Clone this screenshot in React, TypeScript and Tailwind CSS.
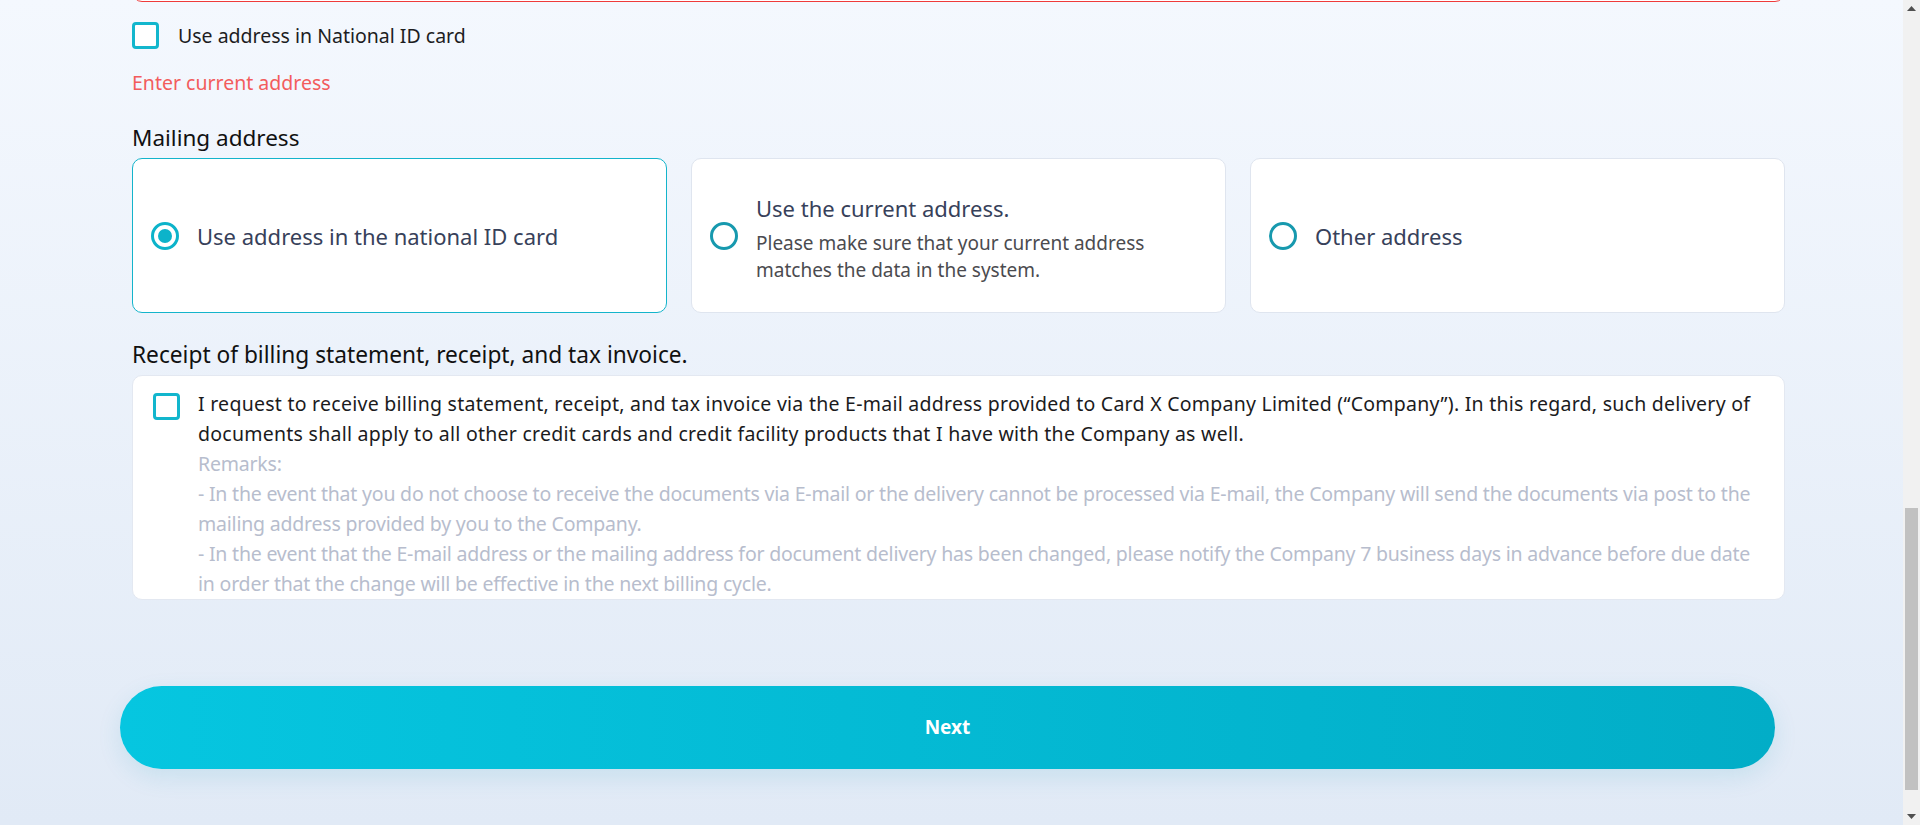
import React, { useState } from 'react'

const mailingOptions = [
  { id: 'idcard', title: 'Use address in the national ID card' },
  {
    id: 'current',
    title: 'Use the current address.',
    note: 'Please make sure that your current address matches the data in the system.',
  },
  { id: 'other', title: 'Other address' },
]

function Checkbox({ checked, onToggle }: { checked: boolean; onToggle: () => void }) {
  return (
    <button
      type="button"
      onClick={onToggle}
      className="flex size-[27px] shrink-0 items-center justify-center rounded-[4px] border-[3px] border-[#12b6cd] bg-white"
    >
      {checked && (
        <svg viewBox="0 0 16 16" className="size-4 text-[#12b6cd]">
          <path d="M3 8.5l3.2 3L13 4.5" fill="none" stroke="currentColor" strokeWidth="2.4" strokeLinecap="round" strokeLinejoin="round" />
        </svg>
      )}
    </button>
  )
}

function Radio({ checked }: { checked: boolean }) {
  return (
    <span
      className={
        checked
          ? 'flex size-[28px] shrink-0 items-center justify-center rounded-full border-[3px] border-[#0cb3ca]'
          : 'flex size-[28px] shrink-0 items-center justify-center rounded-full border-[3px] border-[#1799ae]'
      }
    >
      {checked && <span className="size-[14px] rounded-full bg-[#0cb3ca]" />}
    </span>
  )
}

// classic windows style scrollbar of the page
function Scrollbar() {
  return (
    <div className="flex h-full w-[17px] shrink-0 flex-col bg-[#f1f1f1]">
      <div className="flex h-[17px] items-center justify-center">
        <svg width="9" height="5" viewBox="0 0 9 5">
          <path d="M4.5 0L9 5H0z" fill="#505050" />
        </svg>
      </div>
      <div className="flex flex-1 flex-col">
        <div className="h-[491px]" />
        <div className="mx-[2px] h-[282px] bg-[#c1c1c1]" />
      </div>
      <div className="flex h-[17px] items-center justify-center">
        <svg width="9" height="5" viewBox="0 0 9 5">
          <path d="M0 0h9L4.5 5z" fill="#505050" />
        </svg>
      </div>
    </div>
  )
}

export default function App() {
  const [sameAsIdCard, setSameAsIdCard] = useState(false)
  const [mailing, setMailing] = useState('idcard')
  const [eStatement, setEStatement] = useState(false)

  return (
    <div className="flex h-[825px] w-full overflow-hidden bg-gradient-to-b from-[#f4f8fe] to-[#e1eaf6] font-['Noto_Sans',sans-serif]">
      <main className="flex h-full flex-1 flex-col justify-end overflow-hidden pb-[56px]">
        <div className="ml-[132px] flex w-[1653px] shrink-0 flex-col">
          <div className="h-[64px] rounded-[10px] border border-[#ef3b3b] bg-white" />

          <div className="mt-5 flex items-center gap-[19px]">
            <Checkbox checked={sameAsIdCard} onToggle={() => setSameAsIdCard(!sameAsIdCard)} />
            <span className="text-[19.5px] leading-[26px] text-[#1d1d1f]">Use address in National ID card</span>
          </div>

          <p className="mt-[20px] text-[19.5px] leading-[27px] text-[#f25c5c]">Enter current address</p>

          <h2 className="mt-[27px] text-[22.5px] leading-[30px] text-[#111]">Mailing address</h2>
          <div className="mt-[5px] grid grid-cols-3 gap-6">
            {mailingOptions.map((o) => {
              const checked = mailing === o.id
              return (
                <button
                  key={o.id}
                  type="button"
                  onClick={() => setMailing(o.id)}
                  className={
                    checked
                      ? 'flex h-[155px] items-center gap-[18px] rounded-[10px] border border-[#14b4cb] bg-white pl-[18px] pr-6 text-left'
                      : 'flex h-[155px] items-center gap-[18px] rounded-[10px] border border-[#dfe5ef] bg-white pl-[18px] pr-6 text-left'
                  }
                >
                  <Radio checked={checked} />
                  {o.note ? (
                    <div className="flex flex-col pt-[6px]">
                      <span className="text-[22px] leading-[30px] text-[#37415a]">{o.title}</span>
                      <span className="mt-[7px] max-w-[420px] text-[19px] leading-[27px] text-[#4b4b4f]">{o.note}</span>
                    </div>
                  ) : (
                    <span className="text-[22px] leading-[30px] text-[#37415a]">{o.title}</span>
                  )}
                </button>
              )
            })}
          </div>

          <h2 className="mt-[27px] text-[22.7px] leading-[30px] text-[#111]">
            Receipt of billing statement, receipt, and tax invoice.
          </h2>
          <div className="mt-[5px] flex h-[225px] gap-[18px] rounded-[10px] border border-[#e3e8f1] bg-white pl-5 pr-6 pt-[13px]">
            <div className="pt-[4px]">
              <Checkbox checked={eStatement} onToggle={() => setEStatement(!eStatement)} />
            </div>
            <div className="text-[19.5px] leading-[30px]">
              <p className="tracking-[0.26px] text-[#1b1b1d]">
                I request to receive billing statement, receipt, and tax invoice via the E-mail address provided to Card X
                Company Limited (“Company”). In this regard, such delivery of documents shall apply to all other credit cards
                and credit facility products that I have with the Company as well.
              </p>
              <div className="tracking-[-0.2px] text-[#b7bdcd]">
                <p>Remarks:</p>
                <p>
                  - In the event that you do not choose to receive the documents via E-mail or the delivery cannot be
                  processed via E-mail, the Company will send the documents via post to the mailing address provided by you
                  to the Company.
                </p>
                <p>
                  - In the event that the E-mail address or the mailing address for document delivery has been changed,
                  please notify the Company 7 business days in advance before due date in order that the change will be
                  effective in the next billing cycle.
                </p>
              </div>
            </div>
          </div>
        </div>

        <button
          type="button"
          className="ml-[120px] mt-[86px] h-[83px] w-[1655px] shrink-0 rounded-full bg-gradient-to-r from-[#06c6e0] to-[#02adc7] text-[19px] font-bold text-white shadow-[0_8px_24px_rgba(2,150,180,0.12)]"
        >
          Next
        </button>
      </main>
      <Scrollbar />
    </div>
  )
}
